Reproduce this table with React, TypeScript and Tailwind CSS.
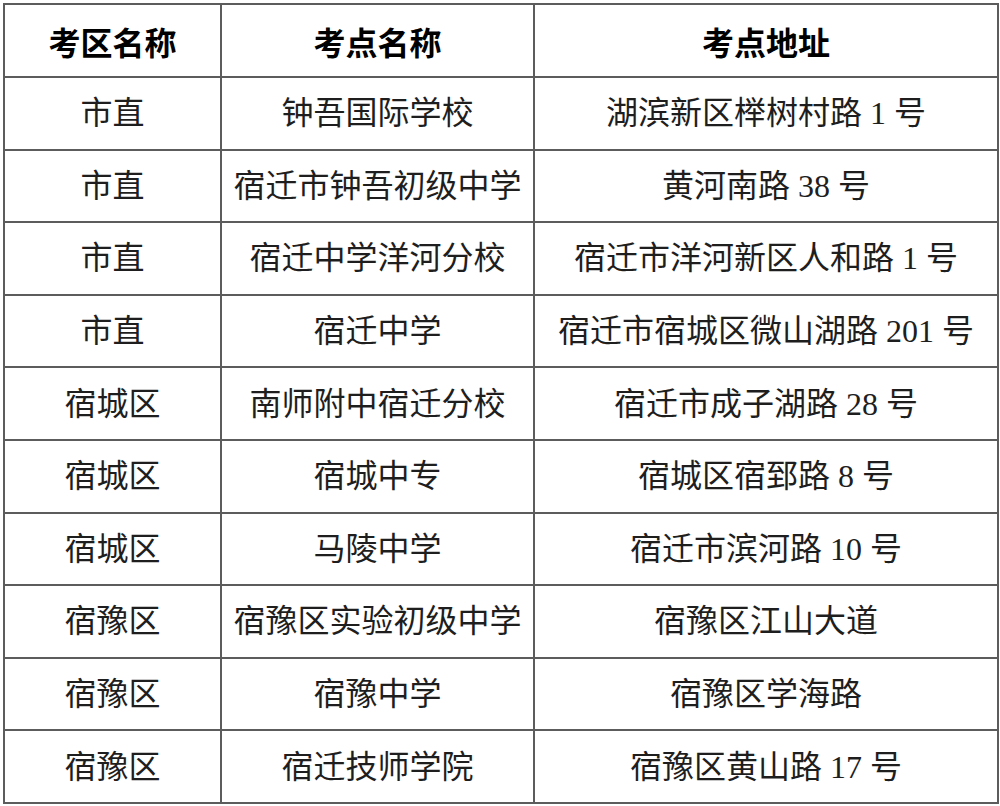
import React from "react";

const rows: [string, string, string][] = [
  ["市直", "钟吾国际学校", "湖滨新区榉树村路 1 号"],
  ["市直", "宿迁市钟吾初级中学", "黄河南路 38 号"],
  ["市直", "宿迁中学洋河分校", "宿迁市洋河新区人和路 1 号"],
  ["市直", "宿迁中学", "宿迁市宿城区微山湖路 201 号"],
  ["宿城区", "南师附中宿迁分校", "宿迁市成子湖路 28 号"],
  ["宿城区", "宿城中专", "宿城区宿郅路 8 号"],
  ["宿城区", "马陵中学", "宿迁市滨河路 10 号"],
  ["宿豫区", "宿豫区实验初级中学", "宿豫区江山大道"],
  ["宿豫区", "宿豫中学", "宿豫区学海路"],
  ["宿豫区", "宿迁技师学院", "宿豫区黄山路 17 号"],
];

export default function App() {
  return (
    <div className="w-[1000px] h-[806px] bg-white pt-[3px] pl-[3px]">
      <table className="border-collapse table-fixed w-[994px] border-2 border-[#5c5c5c]">
        <colgroup>
          <col className="w-[217px]" />
          <col className="w-[313px]" />
          <col className="w-[464px]" />
        </colgroup>
        <thead>
          <tr className="h-[73px]">
            {["考区名称", "考点名称", "考点地址"].map((h) => (
              <th
                key={h}
                className="border-2 border-[#5c5c5c] text-center align-middle text-[32px] font-bold text-black p-0 [font-family:'Noto_Sans_CJK_SC',sans-serif]"
              >
                {h}
              </th>
            ))}
          </tr>
        </thead>
        <tbody>
          {rows.map((r, i) => (
            <tr key={i} className="h-[72.6px]">
              {r.map((c, j) => (
                <td
                  key={j}
                  className="border-2 border-[#5c5c5c] text-center align-middle text-[32px] font-normal text-[#1e1e1e] p-0 whitespace-nowrap [font-family:'Liberation_Serif','Noto_Sans_CJK_SC',serif]"
                >
                  {c}
                </td>
              ))}
            </tr>
          ))}
        </tbody>
      </table>
    </div>
  );
}
